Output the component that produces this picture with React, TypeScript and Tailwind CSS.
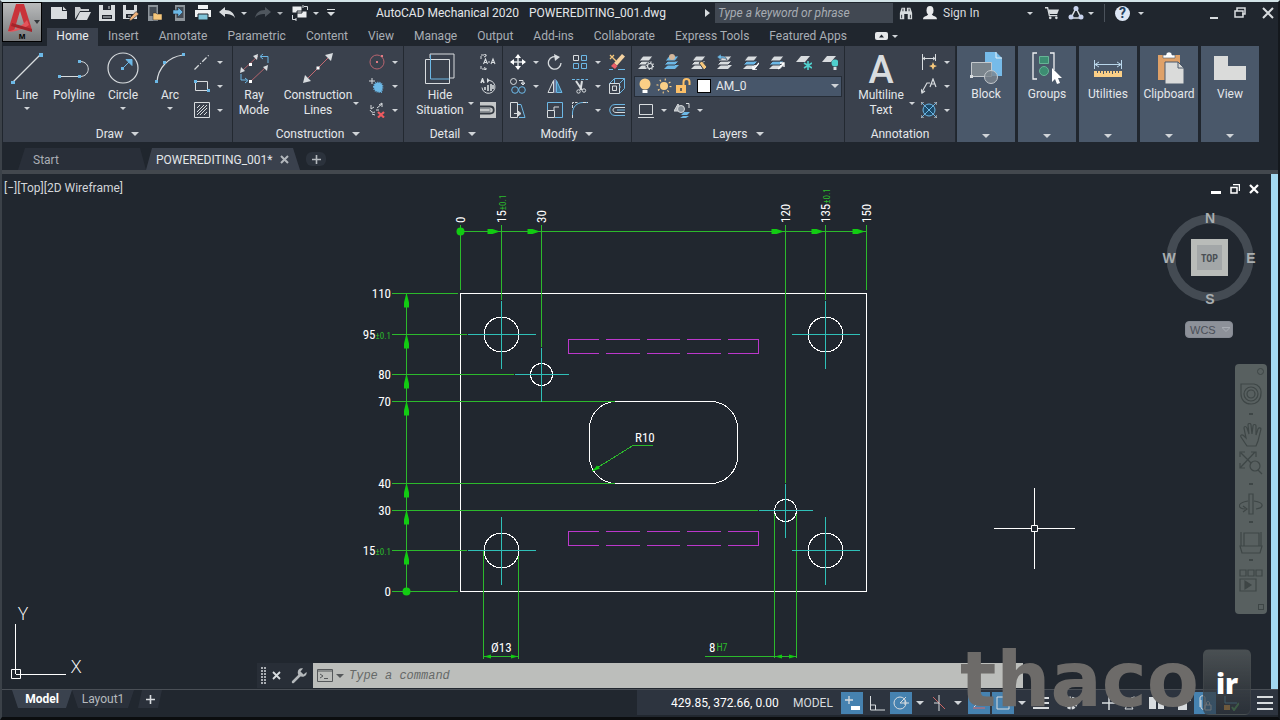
import type { ReactNode } from "react";

const INK = "#d8dcdf";
const BLUE = "#6cb8e6";
const AMBER = "#f6c77b";

type IconProps = { children: ReactNode; size?: string; box?: string };

function Icon({ children, size = "size-4", box = "0 0 16 16" }: IconProps) {
  return (
    <svg className={`${size} shrink-0`} viewBox={box} fill="none" stroke={INK} strokeWidth={1} aria-hidden="true">
      {children}
    </svg>
  );
}

function Caret({ wide = false }: { wide?: boolean }) {
  return (
    <svg className={wide ? "h-1 w-2 shrink-0" : "h-[3px] w-[6px] shrink-0"} viewBox="0 0 8 4" aria-hidden="true">
      <path d="M0 0h8L4 4z" fill="#d0d4d8" />
    </svg>
  );
}

/* ---------- small icons ---------- */

const icons = {
  newFile: (
    <Icon>
      <path d="M0 2h11v4h5v8H0z" fill={INK} stroke="none" />
      <path d="M12 1.500l3.500 3.500H12z" fill={INK} stroke="none" />
    </Icon>
  ),
  open: (
    <Icon>
      <path d="M0 14V2h5l1 2h8v2H5z" fill="#c9cdd0" stroke="none" />
      <path d="M1 15L5 7h11l-4 8z" fill={INK} stroke="none" />
    </Icon>
  ),
  save: (
    <Icon>
      <path d="M0 0h16v16H0z" fill={INK} stroke="none" />
      <path d="M4 0h8v5H4zM3 10h10v4H3z" fill="#20262e" stroke="none" />
      <path d="M4 12h8" />
      <path d="M10 1v3" />
    </Icon>
  ),
  saveAs: (
    <Icon>
      <path d="M0 0h14v14H0z" fill={INK} stroke="none" />
      <path d="M3 0h8v5H3zM3 9h8v4H3z" fill="#20262e" stroke="none" />
      <path d="M8 15.500l-1.500.5.5-3L13 6.500l3 2.500z" fill="#f0b37b" stroke="#20262e" strokeWidth={0.6} />
      <path d="M5 11h3" />
    </Icon>
  ),
  openWeb: (
    <Icon>
      <path d="M1 0h10v16H1z" fill="#8d949a" stroke="none" />
      <path d="M2.500 2h7v9h-7z" fill="#454c55" stroke="none" />
      <path d="M6 15V8h3l1 1h5v6z" fill={AMBER} stroke="#20262e" strokeWidth={0.5} />
    </Icon>
  ),
  saveWeb: (
    <Icon>
      <path d="M4 0h10v16H4z" fill="#8d949a" stroke="none" />
      <path d="M5.500 2h7v11h-7z" fill="#454c55" stroke="none" />
      <path d="M2 5h5V2l5 5-5 5V9H2z" fill={BLUE} stroke="#20262e" strokeWidth={0.5} />
    </Icon>
  ),
  print: (
    <Icon>
      <path d="M3 0h10v4H3zM0 5h16v7H0z" fill="#f0f2f3" stroke="none" />
      <path d="M3 9h10v6H3z" fill="#7fc3d8" stroke="#20262e" />
      <path d="M2 4.500h12" stroke="#20262e" />
    </Icon>
  ),
  undo: (
    <Icon>
      <path d="M0 7l6-5v3c6 0 9 3 10 8-2-3-5-4-10-4v3z" fill={INK} stroke="none" />
    </Icon>
  ),
  redo: (
    <Icon>
      <path d="M16 7l-6-5v3C4 5 1 8 0 13c2-3 5-4 10-4v3z" fill="#5b626a" stroke="none" />
    </Icon>
  ),
  workspace: (
    <Icon size="h-4 w-[18px]" box="0 0 18 16">
      <path d="M1 1h10v7H1zM6 6h10v7H6z" fill="#eceef0" stroke="#20262e" />
      <path d="M13 1.500h3.500V5M1.500 10v4.500H5M12 0v3M5 13v3" />
    </Icon>
  ),
  customize: (
    <Icon size="size-2" box="0 0 8 8">
      <path d="M0 .5h8" />
      <path d="M0 3h8L4 7z" fill={INK} stroke="none" />
    </Icon>
  ),
  binoculars: (
    <Icon size="size-[14px]">
      <path d="M1 15V8l2-6h4v4h2V2h4l2 6v7h-5V9H6v6z" fill={INK} stroke="none" />
      <path d="M3 10v4M13 10v4M4.500 3v3M11.500 3v3" stroke="#20262e" />
    </Icon>
  ),
  user: (
    <Icon size="size-[14px]">
      <ellipse cx="8" cy="5" rx="4" ry="5" fill="#e8eaec" stroke="none" />
      <path d="M0 15c0-4 5-3 6-6h4c1 3 6 2 6 6z" fill="#e8eaec" stroke="none" />
    </Icon>
  ),
  cart: (
    <Icon size="size-[14px]">
      <path d="M0 2h3l2 9h9" strokeWidth={1.5} />
      <path d="M4 4h12l-2 5H5z" fill={INK} stroke="none" />
      <circle cx="6" cy="13.500" r="1.500" fill={INK} stroke="none" />
      <circle cx="13" cy="13.500" r="1.500" fill={INK} stroke="none" />
    </Icon>
  ),
  share: (
    <Icon>
      <path d="M8 3L3 13h10z" strokeWidth={1.5} />
      <circle cx="8" cy="3.500" r="2.500" fill="#c9d3ee" stroke="none" />
      <circle cx="3" cy="12" r="2.500" fill="#c9d3ee" stroke="none" />
      <circle cx="13" cy="12" r="2.500" fill="#c9d3ee" stroke="none" />
    </Icon>
  ),
  xline: (
    <Icon>
      <path d="M.5 15.500l15-15" strokeDasharray="6 2 1 2" strokeWidth={1.3} />
    </Icon>
  ),
  rect: (
    <Icon>
      <path d="M1.500 3.500h12v9h-12z" />
      <path d="M0 2h3v3H0zM13 11h3v3h-3z" fill={BLUE} stroke="none" />
    </Icon>
  ),
  hatch: (
    <Icon>
      <path d="M.5.500h15v15H.5z" />
      <path d="M3 6l3-3M3 10l7-7M3 13L13 3M6 13l7-7M10 13l3-3" />
    </Icon>
  ),
  centerCircle: (
    <Icon>
      <circle cx="8" cy="8" r="7" stroke="#b8646f" />
      <path d="M7 7h2v2H7zM12 1h2v2h-2z" fill="#e07b84" stroke="none" />
    </Icon>
  ),
  constrFill: (
    <Icon>
      <path d="M5 9c0-4 3-5 6-4s3 6 1 9c-4 0-7-1-7-5z" fill={BLUE} stroke={BLUE} strokeDasharray="1 1" strokeWidth={2} />
      <path d="M0 3h6M3 0v6" />
    </Icon>
  ),
  constrErase: (
    <Icon>
      <path d="M1 8c1 2 3 3 5 2M8 6l5-4M2 3v4l3-2M10 3l3-2v4M6 13l-3-1M7 8h3" />
      <path d="M9 10l6 5.500M15 10l-6 5.500" stroke="#ef5a5f" strokeWidth={2.2} />
    </Icon>
  ),
  detailAA: (
    <Icon>
      <path d="M1 5V1h5M1 12v3h5M4 0l3 1.500-3 1.500M4 13.500l3 1.500-3 1" strokeDasharray="3 1" />
      <path d="M3.500 10l2-5 2 5M4.500 8.500h2M11 10l2-5 2 5M12 8.500h2M8 8h2" strokeWidth={1.1} />
    </Icon>
  ),
  detailRotate: (
    <Icon>
      <path d="M7 2.500a6.500 6.500 0 1 1-5 7" />
      <path d="M1 5l1.500-4L4 5M5 12V9M8 13V7M11 13V6M13 11V7" strokeWidth={1.6} />
      <path d="M7 0v5l3-2.500z" fill={INK} stroke="none" />
    </Icon>
  ),
  detailPocket: (
    <Icon>
      <path d="M0 0h16v16H0z" fill="#c5c7c8" stroke="none" />
      <path d="M0 4.500h10c5 0 5 7 0 7H0" stroke="#333941" strokeWidth={1.8} />
      <path d="M0 6.500h10v3H0" stroke="#8b9095" />
    </Icon>
  ),
  move: (
    <Icon>
      <path d="M8 1v14M1 8h14" strokeWidth={1.5} />
      <path d="M8 0l3 4H5zM8 16l3-4H5zM0 8l4-3v6zM16 8l-4-3v6z" fill="#fff" stroke="none" />
    </Icon>
  ),
  rotate: (
    <Icon>
      <path d="M11 3.500a6.300 6.300 0 1 0 3 5.500" strokeWidth={1.3} />
      <path d="M7 0l6 3-5 4z" fill={INK} stroke="none" />
    </Icon>
  ),
  array: (
    <Icon>
      <path d="M1.500 1.500h5v5h-5z" />
      <path d="M9.500 1.500h5v5h-5zM1.500 9.500h5v5h-5zM9.500 9.500h5v5h-5z" stroke={BLUE} />
    </Icon>
  ),
  erase: (
    <Icon>
      <path d="M5 9L13 0l3 2.500-8 9z" fill="#f5d3a2" stroke="none" />
      <path d="M5 9l3.500 3L6 15l-4-3z" fill="#ec5f69" stroke="none" />
      <path d="M1 1l6 6M1 5l4-4" stroke={AMBER} strokeWidth={1.3} />
      <path d="M9 15.500h7M0 15.500h4" stroke={BLUE} />
    </Icon>
  ),
  copy: (
    <Icon>
      <circle cx="3.500" cy="3.500" r="3" />
      <circle cx="5" cy="12" r="3.300" stroke={BLUE} />
      <circle cx="12" cy="12" r="3.300" stroke={BLUE} />
      <path d="M9 2.500h4V6M11 5h4l-2 2z" />
    </Icon>
  ),
  mirror: (
    <Icon>
      <path d="M6.500 2.500v12h-5.500z" />
      <path d="M9.500 2.500v12h5.500z" stroke={BLUE} fill="#3e7ba0" />
      <path d="M8 1v14" stroke="#9ad" />
    </Icon>
  ),
  trim: (
    <Icon>
      <path d="M0 1.500h16" strokeDasharray="3 1.500" stroke={BLUE} />
      <path d="M4 3l6 9M10 3l-1.500 9" strokeWidth={2} />
      <circle cx="6.500" cy="13.500" r="1.700" />
      <circle cx="12" cy="12.500" r="1.700" />
    </Icon>
  ),
  explode: (
    <Icon>
      <path d="M.5 5.500h10v10H.5zM3.500 8v4.500h4V8z" />
      <path d="M.5 5.500l5-5h10v10l-5 5M10.500 5.500l5-5M5.500 1v4M12 9h-2" stroke={BLUE} />
    </Icon>
  ),
  stretch: (
    <Icon>
      <path d="M.5.500h7v15h-7z" />
      <path d="M8 2.500h3l4 13H9" stroke={BLUE} />
      <path d="M4 11.500h5M8 9l3 2.500L8 14z" fill={INK} />
    </Icon>
  ),
  scale: (
    <Icon>
      <path d="M.5 8V.500h15v15H8" stroke={BLUE} />
      <path d="M.5 8.500h7v7h-7zM7 8V5h5" />
    </Icon>
  ),
  fillet: (
    <Icon>
      <path d="M.5 15.500V11C.5 5 5 .500 11 .500h5" stroke={BLUE} />
      <path d="M.5 16v-4M11 .500h5M.5 6V.500h5" strokeDasharray="3 1" />
    </Icon>
  ),
  offset: (
    <Icon>
      <path d="M16 2.500H6c-7 0-7 11 0 11h10" stroke={BLUE} />
      <path d="M16 5.500H7c-4 0-4 5 0 5h9" />
      <path d="M16 8H8" stroke={BLUE} />
    </Icon>
  ),
  viewport: (
    <Icon>
      <path d="M1.500 2.500h13v10h-13zM0 15.500h16" />
    </Icon>
  ),
  layerMove: (
    <Icon>
      <path d="M0 9l4-7 4 7z" fill="#b3b8bd" />
      <circle cx="7" cy="7" r="3.500" fill="#88919a" />
      <path d="M12 1.500h3V6" />
      <path d="M7 13l3-3h6l-3 3zM6 16l3-2h6l-3 2z" fill={BLUE} stroke="none" />
    </Icon>
  ),
  dimension: (
    <Icon>
      <path d="M1.500 0v16M14.500 0v7M2 4.500h12M4 3L2 4.500 4 6M12 3l2 1.500L12 6" />
      <path d="M12 8l1.200 3 3 1-3 1.200L12 16l-1.200-2.800L8 12l2.800-1z" fill={AMBER} stroke="none" />
    </Icon>
  ),
  leader: (
    <Icon>
      <path d="M1 14L6 5h3M0 11l1 4 3-2M9 9l3-8 3 8M10 6h4" strokeWidth={1.2} />
    </Icon>
  ),
  centerMark: (
    <Icon>
      <circle cx="8" cy="8" r="6" stroke={BLUE} fill="#1d4a69" />
      <path d="M1 1l14 14M15 1L1 15" stroke={BLUE} />
      <path d="M0 3V0h3M13 0h3v3M16 13v3h-3M3 16H0v-3" />
    </Icon>
  ),
};

type LayerKind = "props" | "make" | "match" | "previous" | "isolate" | "unisolate" | "freeze" | "off";

function LayerIcon({ kind }: { kind: LayerKind }) {
  const single = kind === "freeze" || kind === "off";
  const mid = kind === "props" || kind === "match" || kind === "previous" ? INK : BLUE;
  return (
    <Icon>
      {single ? (
        <path d="M0 8l5-6h9l-5 6z" fill={INK} stroke="none" />
      ) : (
        <g stroke="none">
          <path d="M0 15l4-4h11l-4 4z" fill={kind === "make" ? BLUE : INK} />
          <path d="M0 11l4-4h11l-4 4z" fill={mid} stroke="#3a414d" />
          <path d="M1 7l4-5h10l-4 5z" fill={kind === "make" ? BLUE : INK} stroke="#3a414d" />
        </g>
      )}
      {kind === "props" && (
        <>
          <circle cx="12" cy="12" r="4.500" fill="#3a414d" stroke="none" />
          <circle cx="12" cy="12" r="2.500" strokeWidth={1.2} />
          <circle cx="12" cy="12" r="3.600" strokeWidth={1.2} strokeDasharray="1.200 1.600" />
        </>
      )}
      {kind === "make" && <circle cx="8" cy="3" r="3" fill="#d5b79a" stroke="none" />}
      {kind === "match" && <path d="M8 9l3-2 5 6-3 3z" fill={AMBER} stroke="#3a414d" />}
      {kind === "previous" && <path d="M0 3l4-3v2c4 0 5 1 6 4-2-2-3-2-6-2v2z" fill={BLUE} stroke="#3a414d" strokeWidth={0.5} />}
      {kind === "isolate" && <path d="M16 9l-5 6M10 12v4h4" strokeWidth={1.3} stroke="#fff" />}
      {kind === "unisolate" && <path d="M9 15l6-6M11 9h4v4" strokeWidth={1.3} stroke="#fff" />}
      {kind === "freeze" && (
        <g stroke="#4fd0cd" strokeWidth={1.6}>
          <path d="M12 7v9M8 9l8 5M16 9l-8 5" />
        </g>
      )}
      {kind === "off" && (
        <g stroke="none">
          <circle cx="13" cy="9" r="3.500" fill="#4fd0cd" />
          <path d="M11.500 13h3v3h-3z" fill={INK} />
        </g>
      )}
    </Icon>
  );
}

/* ---------- ribbon building blocks ---------- */

function Tool({ icon, label, caret = false }: { icon: ReactNode; label: string; caret?: boolean }) {
  return (
    <button aria-label={label} className="flex h-6 items-center gap-[7px]">
      {icon}
      {caret && <Caret />}
    </button>
  );
}

function BigTool({ icon, lines, width, caret = "none" }: { icon: ReactNode; lines: string[]; width: string; caret?: "none" | "below" | "side" }) {
  return (
    <button className={`${width} relative flex shrink-0 flex-col items-center pt-[6px]`}>
      <span className="flex h-9 items-start justify-center">{icon}</span>
      <span className="flex flex-col text-center leading-[15px]">
        {lines.map((line) => (
          <span key={line}>{line}</span>
        ))}
      </span>
      {caret === "below" && (
        <span className="mt-1 flex">
          <Caret />
        </span>
      )}
      {caret === "side" && (
        <span className="absolute right-[2px] bottom-5 flex">
          <Caret />
        </span>
      )}
    </button>
  );
}

function Panel({ title, width, caret = true, children }: { title: string; width: string; caret?: boolean; children: ReactNode }) {
  return (
    <section className={`${width} flex shrink-0 flex-col border-r border-[#232931] bg-[#3a414d]`}>
      <div className="flex h-[79px]">{children}</div>
      <button className="flex h-[17px] items-center justify-center gap-2">
        {title}
        {caret && <Caret wide />}
      </button>
    </section>
  );
}

function CollapsedPanel({ title, icon }: { title: string; icon: ReactNode }) {
  return (
    <button className="flex w-[58px] shrink-0 flex-col items-center bg-[#4a586a] pt-1 pb-1">
      <span className="flex h-9 items-center">{icon}</span>
      <span>{title}</span>
      <span className="mt-auto flex">
        <Caret wide />
      </span>
    </button>
  );
}

const big = "size-8";
const bigBox = "0 0 32 32";

function TitleBar() {
  return (
    <div className="flex h-[22px] items-center">
      <div className="flex w-[323px] shrink-0 items-center gap-2 pl-[9px]">
        <button aria-label="New">{icons.newFile}</button>
        <button aria-label="Open">{icons.open}</button>
        <button aria-label="Save">{icons.save}</button>
        <button aria-label="Save As">{icons.saveAs}</button>
        <button aria-label="Open from Web">{icons.openWeb}</button>
        <button aria-label="Save to Web">{icons.saveWeb}</button>
        <button aria-label="Plot">{icons.print}</button>
        <button aria-label="Undo" className="flex items-center gap-[6px]">
          {icons.undo}
          <Caret />
        </button>
        <button aria-label="Redo" className="flex items-center gap-[6px] opacity-80">
          {icons.redo}
          <Caret />
        </button>
        <button aria-label="Workspace" className="flex items-center gap-1">
          {icons.workspace}
          <Caret />
        </button>
        <button aria-label="Customize">{icons.customize}</button>
      </div>
      <h1 className="flex w-[340px] shrink-0 gap-[10px] pl-[11px] whitespace-nowrap text-[#e4e7ea]">
        <span>AutoCAD Mechanical 2020</span>
        <span>POWEREDITING_001.dwg</span>
      </h1>
      <svg className="mr-[5px] h-2 w-[5px]" viewBox="0 0 5 8" aria-hidden="true">
        <path d="M0 0l5 4-5 4z" fill={INK} />
      </svg>
      <input
        aria-label="Search"
        placeholder="Type a keyword or phrase"
        className="h-5 w-[178px] bg-[#414852] px-[3px] italic outline-none placeholder:text-[#a7acb2]"
      />
      <div className="ml-[6px] flex items-center gap-[10px]">
        <button aria-label="Find">{icons.binoculars}</button>
        <button className="flex w-[110px] items-center gap-[6px]">
          {icons.user}
          <span>Sign In</span>
          <span className="ml-auto flex">
            <Caret />
          </span>
        </button>
      </div>
      <div className="ml-[12px] flex items-center gap-[9px]">
        <button aria-label="Store">{icons.cart}</button>
        <button aria-label="Apps" className="flex items-center gap-1">
          {icons.share}
          <Caret />
        </button>
        <span className="mx-[1px] h-[18px] w-px bg-[#4b525b]" />
        <button aria-label="Help" className="flex items-center gap-2">
          <span className="flex size-[15px] items-center justify-center rounded-full bg-[#dde6f5] text-sm leading-none font-bold text-[#24405e]">?</span>
          <Caret />
        </button>
      </div>
      <div className="ml-auto flex items-center gap-4 pr-1">
        <button aria-label="Minimize">
          <Icon size="h-3 w-2" box="0 0 8 12">
            <path d="M0 11h8" strokeWidth={2} />
          </Icon>
        </button>
        <button aria-label="Restore">
          <Icon size="size-3" box="0 0 12 12">
            <path d="M3 4V1h8v6H8M1 4h8v6H1z" strokeWidth={1.5} />
          </Icon>
        </button>
        <button aria-label="Close">
          <Icon size="size-3" box="0 0 12 12">
            <path d="M1 1l10 10M11 1L1 11" strokeWidth={2} />
          </Icon>
        </button>
      </div>
    </div>
  );
}

const ribbonTabs = ["Insert", "Annotate", "Parametric", "Content", "View", "Manage", "Output", "Add-ins", "Collaborate", "Express Tools", "Featured Apps"];

function RibbonTabs() {
  return (
    <nav className="flex h-[18px] items-start text-[#a9aeb5]">
      <button className="ml-[5px] h-full w-[51px] bg-[#3a414d] pb-[2px] text-[#eceef0]">Home</button>
      <div className="ml-[10px] flex gap-5 whitespace-nowrap">
        {ribbonTabs.map((tab) => (
          <button key={tab}>{tab}</button>
        ))}
      </div>
      <button aria-label="Ribbon display" className="ml-7 flex h-4 items-center gap-1">
        <svg className="h-2 w-[13px]" viewBox="0 0 13 8" aria-hidden="true">
          <rect width="13" height="8" rx="2" fill="#e6e8ea" />
          <path d="M4 5.500h5L6.500 2.500z" fill="#20262e" />
        </svg>
        <Caret />
      </button>
    </nav>
  );
}

function LayersBody() {
  const kinds: LayerKind[] = ["props", "make", "match", "previous", "isolate", "unisolate", "freeze", "off"];
  return (
    <div className="flex w-full flex-col px-[2px] pt-1">
      <div className="flex h-6 items-center justify-between px-1">
        {kinds.map((kind) => (
          <button key={kind} aria-label={`Layer ${kind}`}>
            <LayerIcon kind={kind} />
          </button>
        ))}
      </div>
      <div className="flex h-6 items-center">
        <div className="relative flex h-[21px] w-full items-center gap-[3px] border border-[#262d37] bg-[#47566a] pl-[2px]">
          <Icon>
            <circle cx="8" cy="6" r="5.500" fill="#fbcf86" stroke="none" />
            <path d="M5.500 12h5v3h-5z" fill="#fff" stroke="none" />
          </Icon>
          <Icon>
            <circle cx="8" cy="8" r="4" fill="#fbcf86" stroke="none" />
            <circle cx="8" cy="8" r="6.500" stroke="#fbcf86" strokeWidth={2} strokeDasharray="1.100 4" />
          </Icon>
          <Icon>
            <path d="M1 7h10v8H1z" fill="#fbbf68" stroke="none" />
            <path d="M8.500 8V4c0-4 6-4 6 0v3" stroke="#fbbf68" strokeWidth={2} />
            <path d="M6 10v3" stroke="#3a414d" strokeWidth={1.5} />
          </Icon>
          <span className="ml-[3px] size-[14px] border border-black bg-white" />
          <select aria-label="Layer" className="h-full flex-1 appearance-none bg-transparent pl-[2px] outline-none">
            <option>AM_0</option>
          </select>
          <span className="pointer-events-none absolute right-[2px] flex">
            <Caret wide />
          </span>
        </div>
      </div>
      <div className="flex h-6 items-center gap-[7px] pl-1">
        <Tool icon={icons.viewport} label="Viewport layer" caret />
        <Tool icon={icons.layerMove} label="Move to layer" caret />
      </div>
    </div>
  );
}

function Ribbon() {
  return (
    <div className="flex h-24 pl-px text-[#e4e7ea]">
      <Panel title="Draw" width="w-[230px]">
        <BigTool
          width="w-12"
          lines={["Line"]}
          caret="below"
          icon={
            <Icon size={big} box={bigBox}>
              <path d="M2 30L30 2" strokeWidth={1.3} />
              <path d="M0 29h4v4H0zM28 1h4v4h-4z" fill={BLUE} stroke="none" />
            </Icon>
          }
        />
        <BigTool
          width="w-[46px]"
          lines={["Polyline"]}
          icon={
            <Icon size={big} box={bigBox}>
              <path d="M2 24.500h20c11 0 11-15 0-15" />
              <path d="M0 23h3v3H0zM20 23h3v3h-3zM20 8h3v3h-3z" fill={BLUE} stroke="none" />
            </Icon>
          }
        />
        <BigTool
          width="w-[52px]"
          lines={["Circle"]}
          caret="below"
          icon={
            <Icon size={big} box={bigBox}>
              <circle cx="16" cy="16" r="15" strokeWidth={1.2} />
              <path d="M16 16l7-7M19 7.500h6v6z" stroke={BLUE} fill={BLUE} />
              <path d="M14 15h3v3h-3z" fill={BLUE} stroke="none" />
            </Icon>
          }
        />
        <BigTool
          width="w-[42px]"
          lines={["Arc"]}
          caret="below"
          icon={
            <Icon size={big} box={bigBox}>
              <path d="M3 30C4 16 14 5 29 3" strokeWidth={1.2} />
              <path d="M1 28h3v3H1zM9 9h3v3H9zM28 1h3v3h-3z" fill={BLUE} stroke="none" />
            </Icon>
          }
        />
        <div className="flex flex-col pt-1 pl-[3px]">
          <Tool icon={icons.xline} label="Construction line" caret />
          <Tool icon={icons.rect} label="Rectangle" caret />
          <Tool icon={icons.hatch} label="Hatch" caret />
        </div>
      </Panel>
      <Panel title="Construction" width="w-[171px]">
        <BigTool
          width="w-[42px]"
          lines={["Ray", "Mode"]}
          icon={
            <Icon size={big} box={bigBox}>
              <path d="M4 19L20 4M12 30L28 15" stroke="#b3646c" />
              <path d="M2 21l1-6 4 4zM20 2l-1 6-4-4zM30 13l-1 6-4-4z" fill={INK} stroke="none" />
              <path d="M11 11h3v3h-3zM11 28h3v3h-3z" fill="#fff" stroke="none" />
              <path d="M23 4.500h7V11M3 22v6h6M25 2l-3 2.500L25 7M7 26l3 2.500L7 31" stroke={BLUE} />
            </Icon>
          }
        />
        <BigTool
          width="w-[86px]"
          lines={["Construction", "Lines"]}
          caret="side"
          icon={
            <Icon size={big} box={bigBox}>
              <path d="M4 28L28 4" stroke="#c46a72" />
              <path d="M1 31l2-8 6 6zM31 1l-2 8-6-6z" fill={INK} stroke="none" />
              <path d="M14.500 14.500h3v3h-3z" fill="#fff" stroke="none" />
            </Icon>
          }
        />
        <div className="flex flex-col pt-1 pl-2">
          <Tool icon={icons.centerCircle} label="Construction circle" caret />
          <Tool icon={icons.constrFill} label="Construction fill" caret />
          <Tool icon={icons.constrErase} label="Erase construction" caret />
        </div>
      </Panel>
      <Panel title="Detail" width="w-[99px]">
        <BigTool
          width="w-[72px]"
          lines={["Hide", "Situation"]}
          caret="side"
          icon={
            <Icon size={big} box={bigBox}>
              <path d="M6 6V2h24v24h-4M1.500 7.500h24v24h-24z" />
              <path d="M6.500 3v24h19" stroke={BLUE} />
            </Icon>
          }
        />
        <div className="flex flex-col pt-1 pl-1">
          <Tool icon={icons.detailAA} label="Section" />
          <Tool icon={icons.detailRotate} label="Detail view" />
          <Tool icon={icons.detailPocket} label="Hide pocket" />
        </div>
      </Panel>
      <Panel title="Modify" width="w-[129px]">
        <div className="grid w-full grid-cols-[37px_25px_37px_16px] content-start pt-1 pl-[7px]">
          <Tool icon={icons.move} label="Move" caret />
          <Tool icon={icons.rotate} label="Rotate" />
          <Tool icon={icons.array} label="Array" caret />
          <Tool icon={icons.erase} label="Erase" />
          <Tool icon={icons.copy} label="Copy" caret />
          <Tool icon={icons.mirror} label="Mirror" />
          <Tool icon={icons.trim} label="Trim" caret />
          <Tool icon={icons.explode} label="Explode" />
          <Tool icon={icons.stretch} label="Stretch" />
          <Tool icon={icons.scale} label="Scale" />
          <Tool icon={icons.fillet} label="Fillet" caret />
          <Tool icon={icons.offset} label="Offset" />
        </div>
      </Panel>
      <Panel title="Layers" width="w-[213px]">
        <LayersBody />
      </Panel>
      <Panel title="Annotation" width="w-[111px]" caret={false}>
        <BigTool
          width="w-[72px]"
          lines={["Multiline", "Text"]}
          caret="side"
          icon={<span className="text-[38px] leading-9 font-medium text-[#d8dcdf]">A</span>}
        />
        <div className="flex flex-col pt-1 pl-1">
          <Tool icon={icons.dimension} label="Dimension" caret />
          <Tool icon={icons.leader} label="Leader" caret />
          <Tool icon={icons.centerMark} label="Center mark" caret />
        </div>
      </Panel>
      <div className="ml-px flex gap-[3px]">
        <CollapsedPanel
          title="Block"
          icon={
            <Icon size={big} box={bigBox}>
              <path d="M15 0h11l6 6v18H15z" fill="#76bbe9" stroke="none" />
              <path d="M26 0v6h6" stroke="#e6f2fa" />
              <path d="M1.500 10.500h20v14h-20z" fill="#7b858d" stroke="#c4c9cd" />
              <circle cx="21" cy="25" r="6.500" fill="#7b858d" fillOpacity={0.8} stroke="#c4c9cd" />
              <path d="M0 23h3v3H0z" fill={INK} stroke="none" />
            </Icon>
          }
        />
        <CollapsedPanel
          title="Groups"
          icon={
            <Icon size={big} box={bigBox}>
              <path d="M6 1H2v26h4M19 1h4v17" stroke="#eef0f2" strokeWidth={1.3} />
              <path d="M8.500 4.500h9v7h-9z" fill="#3d8d72" stroke="#66b495" />
              <circle cx="13" cy="19" r="4.500" fill="#3d8d72" stroke="#66b495" />
              <path d="M21 16v14l3-3 2 5 3-1-2-5h4z" fill="#fff" stroke="none" />
            </Icon>
          }
        />
        <CollapsedPanel
          title="Utilities"
          icon={
            <Icon size={big} box={bigBox}>
              <path d="M2.500 8v9M29.500 8v9M3 12.500h26M7 10l-4 2.500L7 15M25 10l4 2.500L25 15" stroke="#b9d6ea" />
              <path d="M2 19h28v6H2z" fill="#fbcf86" stroke="none" />
              <path d="M5.500 19v2M8.500 19v2M11.500 19v3M14.500 19v2M17.500 19v2M20.500 19v3M23.500 19v2M26.500 19v2" stroke="#4a586a" />
            </Icon>
          }
        />
        <CollapsedPanel
          title="Clipboard"
          icon={
            <Icon size={big} box={bigBox}>
              <path d="M5 3h22v25H5z" fill="#dfa168" stroke="none" />
              <path d="M10 3h3c0-4 6-4 6 0h3v3H10z" fill="#fff" stroke="#4a586a" strokeWidth={0.6} />
              <path d="M12 10h13l6 6v16H12z" fill="#dadbda" stroke="#4a586a" />
              <path d="M25 10v6h6" stroke="#4a586a" />
            </Icon>
          }
        />
        <CollapsedPanel
          title="View"
          icon={
            <Icon size={big} box={bigBox}>
              <path d="M0 4h14v10h18v14H0z" fill="#dadbda" stroke="none" />
            </Icon>
          }
        />
      </div>
    </div>
  );
}

function FileTabs() {
  return (
    <div className="flex h-7 items-end border-b-4 border-[#43484e] pl-4">
      <button className="h-[22px] w-[128px] bg-[#292f39] pt-px pl-[15px] text-left text-[#a9aeb5] [clip-path:polygon(7px_0,122px_0,100%_100%,0_100%)]">Start</button>
      <div className="flex h-[22px] w-[154px] items-center gap-2 bg-[#3a414d] pt-px pl-[10px] [clip-path:polygon(6px_0,147px_0,100%_100%,0_100%)]">
        <button className="whitespace-nowrap text-[#e4e7ea]">POWEREDITING_001*</button>
        <button aria-label="Close drawing">
          <Icon size="size-[9px]" box="0 0 9 9">
            <path d="M1 1l7 7M8 1L1 8" strokeWidth={2} stroke="#b3b8bd" />
          </Icon>
        </button>
      </div>
      <button aria-label="New drawing" className="mb-1 ml-[6px] flex h-[14px] w-5 items-center justify-center rounded-md bg-[#2b323c]">
        <Icon size="size-[9px]" box="0 0 9 9">
          <path d="M4.500 0v9M0 4.500h9" strokeWidth={1.6} stroke="#b3b8bd" />
        </Icon>
      </button>
    </div>
  );
}

/* ---------- drawing ---------- */

const GREEN = "#2cba2c";
const BRIGHT = "#12cc12";
const CYAN = "#2fc0b8";
const MAGENTA = "#bc38cc";

const xDims = [
  { x: 460.5, end: 290, label: "0", tol: false },
  { x: 501.5, end: 300, label: "15", tol: true },
  { x: 541.5, end: 347, label: "30", tol: false },
  { x: 785.5, end: 483, label: "120", tol: false },
  { x: 825.5, end: 300, label: "135", tol: true },
  { x: 866.5, end: 290, label: "150", tol: false },
];

const yDims = [
  { y: 293.5, end: 458, label: "110", tol: false },
  { y: 334.5, end: 467, label: "95", tol: true },
  { y: 374.5, end: 514, label: "80", tol: false },
  { y: 401.5, end: 615, label: "70", tol: false },
  { y: 483.5, end: 615, label: "40", tol: false },
  { y: 510.5, end: 758, label: "30", tol: false },
  { y: 550.5, end: 467, label: "15", tol: true },
  { y: 591.5, end: 458, label: "0", tol: false },
];

const holes = [
  { x: 501.5, y: 334.5, r: 17.5, arm: 34 },
  { x: 825.5, y: 334.5, r: 17.5, arm: 34 },
  { x: 501.5, y: 550.5, r: 17.5, arm: 34 },
  { x: 825.5, y: 550.5, r: 17.5, arm: 34 },
  { x: 541.5, y: 374.5, r: 11, arm: 27 },
  { x: 785.5, y: 510.5, r: 11, arm: 27 },
];

const slotDashes = [
  [568, 599],
  [606, 640],
  [647, 680],
  [687, 721],
  [728, 759],
];

function Slot({ y }: { y: number }) {
  return (
    <g stroke={MAGENTA}>
      {slotDashes.map(([a, b]) => (
        <path key={a} d={`M${a} ${y}H${b}M${a} ${y + 14}H${b}`} />
      ))}
      <path d={`M568.5 ${y}v14M758.5 ${y}v14`} />
    </g>
  );
}

function PlateDrawing() {
  return (
    <svg
      className="h-[482px] w-[580px]"
      viewBox="350 180 580 482"
      fill="none"
      strokeWidth={1}
      fontFamily="'Roboto Condensed', 'Liberation Sans Narrow', Roboto, sans-serif"
      fontSize={13}
      role="img"
      aria-label="Plate with ordinate dimensions"
    >
      <g shapeRendering="crispEdges">
        <g stroke="#fff">
          <rect x="460.5" y="293.5" width="406" height="298" />
          <rect x="589.5" y="401.5" width="148" height="82" rx="27" />
        </g>
        <g stroke={GREEN}>
          <path d="M460 231.500H867M406.500 293V592" />
          {xDims.map((d) => (
            <path key={d.x} d={`M${d.x} 225V${d.end}`} />
          ))}
          {yDims.map((d) => (
            <path key={d.y} d={`M392 ${d.y}H${d.end}`} />
          ))}
          <path d="M483.500 551V659M518.500 551V659M483 656.500H519" />
          <path d="M774.500 510V658M796.500 510V658M705 656.500H797" />
          <path d="M653 445.500H633L592 471" />
        </g>
        <Slot y={339.5} />
        <Slot y={531.5} />
        {holes.map((h) => (
          <g key={`${h.x}-${h.y}`}>
            <circle cx={h.x} cy={h.y} r={h.r} stroke="#fff" />
            <path d={`M${h.x - h.arm} ${h.y}h${h.arm * 2}M${h.x} ${h.y - h.arm}v${h.arm * 2}`} stroke={CYAN} />
          </g>
        ))}
      </g>
      <g fill={BRIGHT}>
        <circle cx="460.500" cy="231.500" r="4" />
        <circle cx="406.500" cy="591.500" r="4" />
        {xDims.slice(1).map((d) => (
          <path key={d.x} d={`M${d.x - 14} 229h5l6 2v1l-6 2h-5z`} />
        ))}
        {yDims.slice(0, -1).map((d) => (
          <path key={d.y} d={`M404 ${d.y + 14}v-5l2-8h1l2 8v5z`} />
        ))}
        <path d="M592 471.500l5-6 3 3zM484 656.500l7-2v4zM518 656.500l-7-2v4zM775 656.500l7-2v4zM796 656.500l-7-2v4z" />
      </g>
      <g fill="#fff">
        {xDims.map((d) => (
          <text key={d.x} transform={`translate(${d.x + 4.5} 223) rotate(-90)`}>
            {d.label}
            {d.tol && (
              <tspan fill={GREEN} fontSize={9}>
                ±0.1
              </tspan>
            )}
          </text>
        ))}
        {yDims.map((d) => (
          <text key={d.y} x="391" y={d.y + 4.5} textAnchor="end">
            {d.label}
            {d.tol && (
              <tspan fill={GREEN} fontSize={9}>
                ±0.1
              </tspan>
            )}
          </text>
        ))}
        <text x="635" y="442">R10</text>
        <text x="491" y="652">Ø13</text>
        <text x="709" y="652">
          8
          <tspan fill={GREEN} fontSize={10} dx="1" dy="-1">
            H7
          </tspan>
        </text>
      </g>
    </svg>
  );
}

function ViewCube() {
  return (
    <div className="absolute top-[37px] right-[14px] flex w-24 flex-col items-center">
      <svg className="size-24" viewBox="0 0 96 96" fontFamily="'Liberation Sans', sans-serif" fontWeight="bold" fontSize="14" textAnchor="middle" role="img" aria-label="View cube">
        <circle cx="49" cy="47" r="39" fill="none" stroke="#444b53" strokeWidth="9" />
        <rect x="30" y="28" width="37" height="37" fill="#b9bcb9" />
        <rect x="36" y="34" width="25" height="25" fill="#a3a7a8" />
        <text x="48.500" y="51" fontSize="10" fill="#4a4f55" fontFamily="'Roboto Condensed', Roboto, sans-serif">TOP</text>
        <g fill="#a9aeb0">
          <text x="49" y="12">N</text>
          <text x="49" y="93">S</text>
          <text x="8" y="52">W</text>
          <text x="90" y="52">E</text>
        </g>
      </svg>
      <button className="mt-[14px] flex h-[17px] w-12 items-center gap-[6px] rounded-sm border border-[#858a93] bg-[#8d9199] pl-1 font-['Liberation_Sans',sans-serif] text-[11px] text-[#4a4f58]">
        WCS
        <svg className="h-[5px] w-2" viewBox="0 0 8 5" fill="none" stroke="#a9adb4" aria-hidden="true">
          <path d="M0 .5h8L4 4.500z" />
        </svg>
      </button>
    </div>
  );
}

function NavDot() {
  return <span className="h-[2px] w-1 bg-[#3e4646]" />;
}

function NavBar() {
  const s = { fill: "none", stroke: "#3e4646", strokeWidth: 1.2 };
  return (
    <div className="absolute top-[190px] right-1 flex h-[250px] w-8 flex-col items-center rounded-sm bg-[#586060] pt-1 pb-1">
      <span className="mr-[3px] size-[7px] self-end rounded-full border border-[#3e4646]" />
      <button aria-label="Steering wheel" className="mt-2 mb-2">
        <svg className="size-[22px]" viewBox="0 0 22 22" {...s}>
          <path d="M1 1h13a8 8 0 0 1 7 9c0 7-4 11-10 11S1 17 1 11z" />
          <circle cx="11" cy="11" r="7" />
          <circle cx="11" cy="11" r="4" />
        </svg>
      </button>
      <NavDot />
      <button aria-label="Pan" className="mt-2">
        <svg className="size-6" viewBox="0 0 24 24" {...s}>
          <path d="M8 23l-6-9c-1-2 1-3 3-1l2 2L5 5c0-2 2-2 3 0l2 6-1-9c0-2 3-2 3 0l1 9 1-8c0-2 3-2 3 0v9l2-6c1-2 3-1 3 0l-3 12-2 5z" />
        </svg>
      </button>
      <button aria-label="Zoom extents" className="mt-1">
        <svg className="size-6" viewBox="0 0 24 24" {...s}>
          <path d="M2 2l16 16M16 1L1 17M1 6V1h5M12 1h5v5M1 12v5h5M19 19l4 4" />
          <circle cx="16" cy="15" r="5" fill="#586060" />
        </svg>
      </button>
      <span className="mt-2 flex">
        <NavDot />
      </span>
      <button aria-label="Orbit" className="mt-2">
        <svg className="size-6" viewBox="0 0 24 24" {...s}>
          <path d="M10 1h4v20h-4zM9 8C-3 10-1 16 6 16M15 8c12 2 9 7 2 8M4 13l4 3-4 3" />
        </svg>
      </button>
      <span className="mt-1 flex">
        <NavDot />
      </span>
      <button aria-label="View" className="mt-2">
        <svg className="size-6" viewBox="0 0 24 24" {...s}>
          <path d="M5 2h15v13H5zM2 1v14M22 1v14M1 15h22l-2 7H3z" />
        </svg>
      </button>
      <span className="mt-1 flex">
        <NavDot />
      </span>
      <button aria-label="Show motion" className="mt-2">
        <svg className="size-6" viewBox="0 0 24 24" {...s}>
          <path d="M1 1h6v6H1zM9 1h6v6H9zM17 1h6v6h-6zM1 10h16v12H1z" />
          <path d="M6 12v8l6-4z" fill="#3e4646" />
        </svg>
      </button>
      <span className="mt-auto mr-[3px] size-[6px] self-end border border-[#3e4646]" />
    </div>
  );
}

function CommandLine() {
  return (
    <div className="absolute right-[248px] bottom-px left-[255px] flex h-[25px]">
      <div className="flex w-14 items-center gap-[6px] bg-[#282e37] pl-1">
        <svg className="h-[17px] w-[5px]" viewBox="0 0 5 17" stroke="#a9adb2" strokeWidth="2" strokeDasharray="2 1" aria-hidden="true">
          <path d="M1 0v17M4 0v17" />
        </svg>
        <button aria-label="Close command line">
          <Icon size="size-[9px]" box="0 0 9 9">
            <path d="M1 1l7 7M8 1L1 8" strokeWidth={1.8} />
          </Icon>
        </button>
        <button aria-label="Customize command line" className="ml-1">
          <Icon>
            <path d="M2 14l8-8" strokeWidth={2.5} stroke="#b4b8bb" strokeLinecap="round" />
            <path d="M15.500 4l-3 2.500-3-3L12 .5C8-.5 6 3 7 6s6 4 8 1c.7-1 .8-2 .5-3z" fill="#b4b8bb" stroke="none" />
          </Icon>
        </button>
      </div>
      <label className="flex flex-1 items-center gap-[3px] bg-[#bcbebb] pl-1">
        <svg className="h-[13px] w-4" viewBox="0 0 16 13" fill="none" stroke="#55585a" aria-hidden="true">
          <path d="M.5.500h15v12H.5zM0 2h16M3 5l3 2-3 2M7 9.500h4" />
        </svg>
        <svg className="h-1 w-2" viewBox="0 0 8 4" aria-hidden="true">
          <path d="M0 0h8L4 4z" fill="#55585a" />
        </svg>
        <input
          aria-label="Command"
          placeholder="Type a command"
          className="ml-[2px] h-full flex-1 bg-transparent font-['Liberation_Mono',monospace] text-xs italic outline-none placeholder:text-[#666968]"
        />
      </label>
    </div>
  );
}

function Canvas() {
  return (
    <main className="relative flex flex-1 justify-center border-r-[7px] border-[#a3d8f0] bg-[#21272f] pt-[6px] pl-[7px]">
      <PlateDrawing />
      <div className="absolute top-[6px] left-[2px] text-[#d3d6d9]">[−][Top][2D Wireframe]</div>
      <div className="absolute top-[10px] right-3 flex items-center gap-[9px]">
        <button aria-label="Minimize view">
          <Icon size="size-[10px]" box="0 0 10 10">
            <path d="M0 8.500h10" stroke="#fff" strokeWidth={3} />
          </Icon>
        </button>
        <button aria-label="Restore view">
          <Icon size="size-[10px]" box="0 0 10 10">
            <path d="M3 .5h6.500V7M1 3.500h6v5.500H1z" stroke="#fff" strokeWidth={1.5} />
          </Icon>
        </button>
        <button aria-label="Close view">
          <Icon size="size-[10px]" box="0 0 10 10">
            <path d="M1 1l8 8M9 1L1 9" stroke="#fff" strokeWidth={2.2} />
          </Icon>
        </button>
      </div>
      <ViewCube />
      <NavBar />
      <svg className="absolute top-[314px] left-[992px] size-[82px]" viewBox="0 0 82 82" fill="none" stroke="#fff" aria-hidden="true">
        <path d="M40.500 0v37M40.500 44v37M0 40.500h37M44 40.500h37M37.500 37.500h6v6h-6z" />
      </svg>
      <svg className="absolute bottom-[9px] left-[6px] h-[86px] w-20" viewBox="0 -10 80 86" fill="none" stroke="#fff" fontFamily="'Open Sans', sans-serif" fontWeight="300" fontSize="19" aria-hidden="true">
        <path d="M7.500 20v50M8 70.500h50M3.500 65.500h9v9h-9z" />
        <g fill="#fff" stroke="none" textAnchor="middle">
          <text x="15" y="16">Y</text>
          <text x="68" y="69">X</text>
        </g>
      </svg>
      <CommandLine />
    </main>
  );
}

/* ---------- status bar ---------- */

function StatusButton({ label, active = false, caret = false, children }: { label: string; active?: boolean; caret?: boolean; children: ReactNode }) {
  return (
    <button aria-label={label} className="flex items-center">
      <span className={active ? "flex h-[22px] w-[22px] items-center justify-center bg-[#4682b0]" : "flex h-[22px] w-[22px] items-center justify-center"}>
        <Icon>{children}</Icon>
      </span>
      {caret && (
        <span className="ml-1 flex w-3">
          <Caret wide />
        </span>
      )}
    </button>
  );
}

function StatusBar() {
  return (
    <footer className="flex h-7 items-start border-t border-[#4a4f56] bg-[#21272f]">
      <div className="flex h-[18px] flex-1 pl-[10px]">
        <button className="w-[60px] bg-[#3a424e] font-bold text-white [clip-path:polygon(0_0,100%_0,54px_100%,6px_100%)]">Model</button>
        <button className="w-[62px] bg-[#2b313b] text-[#b5b9be] [clip-path:polygon(0_0,100%_0,56px_100%,6px_100%)]">Layout1</button>
        <button aria-label="Add layout" className="ml-1 flex w-6 items-center justify-center bg-[#2b313b] [clip-path:polygon(4px_0,100%_0,20px_100%,0_100%)]">
          <Icon size="size-[9px]" box="0 0 9 9">
            <path d="M4.500 0v9M0 4.500h9" strokeWidth={1.6} />
          </Icon>
        </button>
      </div>
      <div className="flex h-[25px] w-[641px] items-center bg-[#2d343f]">
        <span className="w-[156px] pl-[34px] whitespace-nowrap text-white">429.85, 372.66, 0.00</span>
        <button className="w-[48px] text-left">MODEL</button>
        <StatusButton label="Snap" active>
          <path d="M5 1v8M1 5h8" strokeWidth={1.3} />
          <path d="M7 11h9v4H7z" fill="#fff" stroke="none" />
        </StatusButton>
        <span className="ml-[3px]" />
        <StatusButton label="Ortho">
          <path d="M1.500 1v14H16M1.500 10h5v5" />
        </StatusButton>
        <span className="ml-[2px]" />
        <StatusButton label="Polar" active caret>
          <circle cx="7" cy="8" r="6" />
          <path d="M7 8h9M7 8l6-6M12 5v5" />
        </StatusButton>
        <StatusButton label="Isodraft" caret>
          <path d="M2 2l12 12" stroke="#c66" />
          <path d="M8 0v16M3 8h5" />
        </StatusButton>
        <span className="ml-[2px]" />
        <StatusButton label="Object snap tracking" active>
          <path d="M2 13h12" stroke="#d66" />
          <path d="M3 12l8-8" />
        </StatusButton>
        <span className="ml-[2px]" />
        <StatusButton label="Object snap" active caret>
          <path d="M2 2h12v12H2z" />
        </StatusButton>
        <StatusButton label="Lineweight">
          <path d="M0 3h16M0 8h16M0 13h16" strokeWidth={2} />
        </StatusButton>
        <span className="ml-2" />
        <StatusButton label="Settings" caret>
          <circle cx="8" cy="8" r="5" strokeWidth={3} strokeDasharray="3 1" />
        </StatusButton>
        <StatusButton label="Monitor">
          <path d="M8 1v14M1 8h14" strokeWidth={1.5} />
        </StatusButton>
        <StatusButton label="Isolate">
          <path d="M2 14l4-7 4 7z" />
          <circle cx="11" cy="6" r="4" />
        </StatusButton>
        <span className="ml-1" />
        <StatusButton label="Hardware">
          <path d="M0 2h7v12H0zM9 8h6v6H9z" fill={INK} stroke="none" />
        </StatusButton>
        <span className="ml-1" />
        <StatusButton label="Unlock">
          <path d="M3 8h9v7H3z" fill={INK} stroke="none" />
          <path d="M10 8V4c0-3 5-3 5 0v2" strokeWidth={1.5} />
        </StatusButton>
        <StatusButton label="Attachments" active>
          <path d="M3 12V3c0-3 5-3 5 0v9c0 3-4 3-4 0V5" />
          <path d="M8 10h6v5H8zM9.500 10V8c0-2 3-2 3 0v2" />
        </StatusButton>
        <span className="ml-1" />
        <StatusButton label="Validate">
          <path d="M2 1v7h12" stroke="#5aa7c8" />
          <path d="M1 10h6v5H1z" fill="#dd9b42" stroke="none" />
          <path d="M9 12l2 3 5-7" stroke="#57a35c" strokeWidth={2} />
        </StatusButton>
        <button aria-label="Customization" className="mr-[5px] ml-auto">
          <Icon>
            <path d="M0 2h16M0 8h16M0 14h16" strokeWidth={2} />
          </Icon>
        </button>
      </div>
    </footer>
  );
}

function Watermark() {
  return (
    <div className="pointer-events-none absolute right-[27px] bottom-[2px] flex items-end gap-1">
      <span className="pb-[3px] font-['DejaVu_Sans',sans-serif] text-[76px] leading-[64px] font-bold text-[#6d6b69]">thaco</span>
      <span className="flex h-[66px] w-12 items-end justify-center rounded-md border border-[#4a4f52]/40 bg-linear-to-b from-[#4a5053] to-[#2a2f35]/60 pb-[14px] font-['Open_Sans',sans-serif] text-[28px] leading-[34px] font-extrabold text-white">
        ir
      </span>
    </div>
  );
}

export default function App() {
  return (
    <div className="relative flex min-h-screen flex-col overflow-hidden border-t-2 border-r-2 border-b-[3px] border-l-2 border-t-[#d3e4e8] border-r-[#14181d] border-b-[#0b0d0f] border-l-[#3b4148] bg-[#20262e] font-['Roboto',sans-serif] text-xs leading-4 text-[#d8dcdf]">
      <header className="flex">
        <button aria-label="Application menu" className="flex h-10 w-10 shrink-0 items-center justify-center border border-black bg-linear-to-b from-[#b9bbbc] to-[#77797b]">
          <svg className="size-[38px]" viewBox="0 0 38 38" aria-hidden="true">
            <path d="M5 28L13 1h8l8 26h-6L17 8l-6 20z" fill="#c9333a" />
            <path d="M4 29c9-2 16-7 20-12l2 5C20 26 13 29 4 29z" fill="#e4545b" />
            <path d="M9 20l20 6v3L8 23z" fill="#a3242b" />
            <path d="M31 17h6l-3 4z" fill="#33373b" />
            <text x="19" y="36" fontSize="8" fontWeight="bold" textAnchor="middle" fontFamily="'Liberation Sans', sans-serif" fill="#000">
              M
            </text>
          </svg>
        </button>
        <div className="flex min-w-0 flex-1 flex-col gap-1">
          <TitleBar />
          <RibbonTabs />
        </div>
      </header>
      <Ribbon />
      <div className="h-1" />
      <FileTabs />
      <Canvas />
      <StatusBar />
      <Watermark />
    </div>
  );
}
